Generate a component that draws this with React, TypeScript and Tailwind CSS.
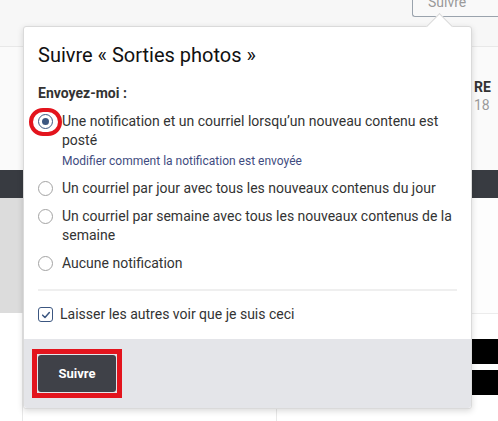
import React from "react";

const font = { fontFamily: "Roboto, 'Liberation Sans', sans-serif" };

const Radio = ({ checked }: { checked?: boolean }) => (
  <span
    className={`mt-[2px] flex h-[15px] w-[15px] shrink-0 items-center justify-center rounded-full border bg-white ${
      checked ? "border-[#3c5781]" : "border-[#a3a3a3]"
    }`}
  >
    {checked && <span className="h-[7px] w-[7px] rounded-full bg-[#3c5781]" />}
  </span>
);

const App = () => {
  return (
    <div className="relative h-[421px] w-[498px] overflow-hidden bg-white" style={font}>
      {/* page behind the popover */}
      <div className="flex h-[47px] items-start justify-end border-b border-[#e8e8e8] bg-[#f7f7f7]">
        <div className="h-[17px] w-[86px] rounded-bl-[3px] border border-t-0 border-r-0 border-[#9aa3ad] bg-[#f9f9f9] pl-[15px] text-[14px] leading-[10px] text-[#9a9a9a]">
          <span className="relative -top-[3px]">Suivre</span>
        </div>
      </div>
      <div className="flex h-[123px] justify-end bg-[#fafafa] pt-[31px]">
        <div className="w-[24px] leading-[18px]">
          <div className="text-[14px] font-bold text-[#333]">RE</div>
          <div className="text-[14px] text-[#9a9a9a]">18</div>
        </div>
      </div>
      <div className="h-[28px] bg-[#383b41]" />
      <div className="flex">
        <div className="w-[23px] shrink-0">
          <div className="h-[115px] bg-[#dcdcdc]" />
          <div className="h-[120px] border-r border-[#e8e8e8]" />
        </div>
        <div className="w-[254px] shrink-0 border-r border-[#e8e8e8]" />
        <div className="flex-1">
          <div className="h-[116px] border-b border-[#ececec] bg-[#fdfdfd]" />
          <div className="mt-[25px] flex flex-col gap-[6px] pl-[195px]">
            <div className="h-[25px] bg-black" />
            <div className="h-[25px] bg-black" />
          </div>
        </div>
      </div>

      {/* popover */}
      <div className="absolute left-[23px] top-[26px] w-[449px] rounded-[3px] border border-[#dadada] bg-white shadow-[0_2px_6px_rgba(0,0,0,0.15)]">
        <div className="absolute -top-[10px] left-[406px] h-[19px] w-[19px] rotate-45 border-l border-t border-[#dadada] bg-white" />
        <div className="relative px-[14px] pt-[14px] pb-[15px]">
          <h2 className="text-[20px] font-normal leading-[28px] text-[#111]">Suivre « Sorties photos »</h2>
          <div className="mt-[14px] text-[14px] font-bold leading-[20px] text-[#333]">Envoyez-moi :</div>
          <div className="mt-[9px] flex flex-col gap-[9px] text-[14px] leading-[19px] text-[#333]">
            <div>
              <label className="relative flex gap-[9px]">
                <Radio checked />
                <span className="absolute -left-[9px] -top-[4px] h-[28px] w-[33px] rounded-full border-[4px] border-[#e3141d]" />
                <span>Une notification et un courriel lorsqu’un nouveau contenu est posté</span>
              </label>
              <div className="mt-[3px] pl-[24px] text-[12px] leading-[17px] text-[#3f4c80]">
                Modifier comment la notification est envoyée
              </div>
            </div>
            <label className="flex gap-[9px]">
              <Radio />
              <span>Un courriel par jour avec tous les nouveaux contenus du jour</span>
            </label>
            <label className="flex gap-[9px]">
              <Radio />
              <span>Un courriel par semaine avec tous les nouveaux contenus de la semaine</span>
            </label>
            <label className="flex gap-[9px]">
              <Radio />
              <span>Aucune notification</span>
            </label>
          </div>
          <div className="mt-[16px] h-[2px] bg-[#efefef]" />
          <label className="mt-[14px] flex items-start gap-[7px] text-[14px] leading-[19px] text-[#333]">
            <span className="mt-[2px] flex h-[15px] w-[15px] shrink-0 items-center justify-center rounded-[3px] border border-[#3c5781] bg-white">
              <svg viewBox="0 0 12 12" className="h-[10px] w-[10px]">
                <path d="M2 6.2 L4.8 9 L10 3" fill="none" stroke="#3c5781" strokeWidth="1.8" strokeLinecap="round" strokeLinejoin="round" />
              </svg>
            </span>
            <span>Laisser les autres voir que je suis ceci</span>
          </label>
        </div>
        <div className="rounded-b-[3px] bg-[#e4e5e9] pl-[8px] py-[10px]">
          <div className="inline-block border-[5px] border-[#e3141d] p-px">
            <button className="h-[37px] w-[78px] rounded-[3px] bg-[#3f4148] text-[13px] font-bold text-white">
              Suivre
            </button>
          </div>
        </div>
      </div>
    </div>
  );
};

export default App;
